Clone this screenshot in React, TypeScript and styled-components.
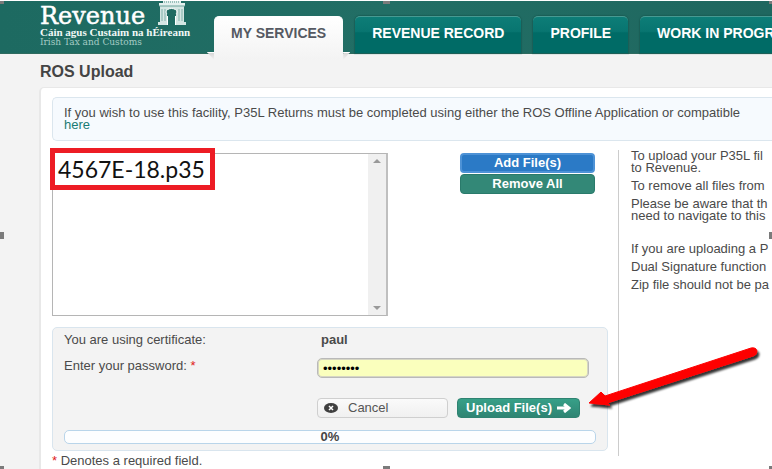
import React, { useState } from "react";
import styled, { createGlobalStyle } from "styled-components";

const GlobalStyle = createGlobalStyle`
  *, *::before, *::after { box-sizing: border-box; }
  html, body { margin: 0; }
  body {
    background: #f3f3f3;
    color: #4a4a4a;
    font: 13px/12px "Liberation Sans", Arial, sans-serif;
    overflow: hidden;
  }
  p, h1 { margin: 0; }
  button, input, select { font: inherit; margin: 0; }
`;

const Page = styled.div`
  position: relative;
  display: flex;
  flex-direction: column;
  min-height: 100vh;
  overflow: hidden;
`;

const Header = styled.header`
  display: flex;
  align-items: flex-start;
  height: 54px;
  border-top: 1px solid #fff;
  border-bottom: 1px solid #2f6b5f;
  background: linear-gradient(90deg, #1d6a61, #226e65 50%, #1f675f);
`;

const Brand = styled.a`
  display: flex;
  flex: none;
  width: 174px;
  margin-left: 40px;
  color: #fff;
  text-decoration: none;
  font-family: "DejaVu Serif", serif;
  white-space: nowrap;
`;

const BrandText = styled.span`
  display: flex;
  flex-direction: column;
  width: 117px;
  padding-top: 5px;
`;

const BrandName = styled.span`
  font-size: 24px;
  line-height: 21px;
  -webkit-text-stroke: 0.5px #fff;
`;

const BrandMotto = styled.span`
  color: #f0f8f6;
  font: bold 11px/10px "Liberation Serif", serif;
`;

const BrandLine = styled.span`
  color: #a5cbc5;
  font-size: 9px;
  line-height: 10px;
`;

const Arch = styled.svg`
  width: 30px;
  height: 25px;
  flex: none;
`;

const Tabs = styled.nav`
  display: flex;
  flex: 1;
  min-width: 0;
  gap: 12px;
  padding-top: 15px;
`;

const Tab = styled.a<{ $active?: boolean }>`
  position: relative;
  flex: none;
  height: ${(p) => (p.$active ? "44px" : "37px")};
  padding: 0 17px;
  border-radius: 5px 5px 0 0;
  border-top: 1px solid ${(p) => (p.$active ? "#fff" : "#479a92")};
  background: ${(p) =>
    p.$active
      ? "linear-gradient(#fff, #f3f3f3)"
      : "linear-gradient(#0d7d77, #087570 40%, #006b66 44%, #006b66)"};
  box-shadow: ${(p) => (p.$active ? "none" : "0 0 1px 1px #1b5f57")};
  color: ${(p) => (p.$active ? "#555962" : "#fff")};
  font-size: 14px;
  font-weight: bold;
  line-height: 33px;
  text-decoration: none;
  white-space: nowrap;

  &::before, &::after {
    content: ${(p) => (p.$active ? '""' : "none")};
    position: absolute;
    top: 35px;
    width: 7px;
    height: 8px;
    background: linear-gradient(#fff, #fff) top / 100% 1px no-repeat,
      linear-gradient(#d3d3d3, #f3f3f3);
  }
  &::before { right: 100%; clip-path: polygon(0 0, 100% 0, 100% 100%); }
  &::after { left: 100%; clip-path: polygon(0 0, 100% 0, 0 100%); }
`;

const Title = styled.h1`
  padding: 10px 0 7px 40px;
  color: #444;
  font-size: 16px;
  line-height: 16px;
`;

const Panel = styled.main`
  flex: 1;
  margin-left: 39px;
  padding: 9px 0 0 11px;
  border: solid #e8e8e8;
  border-width: 1px 0 0 2px;
  border-radius: 5px 0 0 0;
  background: #fff;
`;

const Notice = styled.div`
  height: 44px;
  padding: 9px 11px;
  border: 1px solid #dbe6ee;
  border-right: 0;
  border-radius: 5px 0 0 5px;
  background: #f6fafe;
  white-space: nowrap;
`;

const NoticeLink = styled.a`
  color: #1a7a74;
  text-decoration: none;
`;

const Columns = styled.div`
  display: flex;
  align-items: flex-start;
  margin-top: 12px;
`;

const UploadColumn = styled.form`
  flex: none;
  width: 556px;
`;

const Picker = styled.div`
  display: flex;
  justify-content: space-between;
  align-items: flex-start;
  padding-right: 13px;
`;

const FileBox = styled.div`
  position: relative;
  display: flex;
  justify-content: flex-end;
  width: 336px;
  height: 163px;
  border: 1px solid #b5b5b5;
  border-right: 2px solid #bfbfbf;
  background: #fff;
`;

const FileName = styled.output`
  position: absolute;
  top: -6px;
  left: -3px;
  padding: 0 5px 0 3px;
  border: 5px solid #ed1c24;
  background: #fff;
  color: #111;
  font: 23px/32px Lato, Carlito, sans-serif;
`;

const ScrollTrack = styled.div`
  display: flex;
  flex-direction: column;
  justify-content: space-between;
  align-items: center;
  width: 18px;
  padding: 5px 0;
  background: #f0f0f0;
`;

const ScrollArrow = styled.svg`
  width: 8px;
  height: 4px;
`;

const Stack = styled.div`
  display: flex;
  flex-direction: column;
  gap: 1px;
  width: 135px;
`;

const Button = styled.button<{ $tone: "blue" | "green" | "upload" | "plain" }>`
  display: flex;
  align-items: center;
  justify-content: ${(p) => (p.$tone === "plain" ? "flex-start" : "center")};
  gap: ${(p) => (p.$tone === "plain" ? "10px" : "5px")};
  height: 20px;
  padding: 0 6px;
  border-radius: 4px;
  border: ${(p) =>
    ({
      blue: "2px solid #4d92d6",
      green: "1px solid #2a7a6b",
      upload: "1px solid #2f8371",
      plain: "1px solid #cfcfcf",
    })[p.$tone]};
  background: ${(p) =>
    ({
      blue: "#2b7ac6",
      green: "#338877",
      upload: "linear-gradient(#37a088, #2f8573)",
      plain: "linear-gradient(#fafafa, #f0f0f0)",
    })[p.$tone]};
  color: ${(p) => (p.$tone === "plain" ? "#555" : "#fff")};
  font-weight: ${(p) => (p.$tone === "plain" ? "normal" : "bold")};
  white-space: nowrap;
`;

const Credentials = styled.section`
  display: flex;
  flex-direction: column;
  margin-top: 11px;
  padding: 6px 11px;
  border: 1px solid #d9e5ee;
  border-radius: 5px;
  background: #f3f3f3;
`;

const Field = styled.div<{ $gap?: boolean }>`
  display: grid;
  grid-template-columns: 253px 272px;
  align-items: start;
  margin-top: ${(p) => (p.$gap ? "12px" : "0")};
`;

const Label = styled.label`
  padding-top: 2px;
`;

const Value = styled.strong`
  padding: 0 4px;
`;

const PasswordInput = styled.input`
  width: 100%;
  height: 20px;
  padding: 0 5px;
  border: 1px solid #b9b9b9;
  border-radius: 5px;
  box-shadow: inset 0 0 0 1px #d6d6c4;
  background: #faffbd;
  color: #000;
`;

const Actions = styled.div`
  display: grid;
  grid-template-columns: 131px 123px;
  gap: 9px;
  margin: 20px 0 0 253px;
`;

const Progress = styled.div`
  margin-top: 12px;
  border: 1px solid #b9d5ea;
  border-radius: 5px;
  background: #fdfeff;
  color: #444;
  font-weight: bold;
  line-height: 12px;
  text-align: center;
`;

const Required = styled.span`
  color: #e02020;
`;

const Footnote = styled.p`
  margin-top: 4px;
`;

const Help = styled.aside`
  display: flex;
  flex: 1;
  flex-direction: column;
  gap: 6px;
  min-width: 0;
  height: 306px;
  margin: -3px 0 0 10px;
  padding: 0 0 0 12px;
  border-left: 1px solid #ccc;
  white-space: nowrap;
`;

const HelpText = styled.p<{ $spaced?: boolean }>`
  margin-top: ${(p) => (p.$spaced ? "15px" : "0")};
`;

const Pointer = styled.svg`
  position: absolute;
  left: 585px;
  top: 342px;
  width: 180px;
  height: 70px;
  pointer-events: none;
`;

const Handle = styled.span<{ $x: string; $y: string }>`
  position: absolute;
  width: ${(p) => (p.$x === "center" ? "7px" : "4px")};
  height: ${(p) => (p.$y === "center" ? "7px" : "3px")};
  background: #7b7b7b;
  ${(p) => ({ left: "left: 0;", center: "left: calc(50% - 3px);", right: "right: 0; width: 3px;" })[p.$x]}
  ${(p) => ({ top: "top: 1px;", center: "top: calc(50% - 3px);", bottom: "bottom: 0;" })[p.$y]}
`;

const handles = [
  ["left", "top"], ["center", "top"], ["right", "top"],
  ["left", "center"], ["right", "center"],
  ["left", "bottom"], ["center", "bottom"], ["right", "bottom"],
];

export default function App() {
  const [password, setPassword] = useState("password");
  return (
    <Page>
      <GlobalStyle />
      <Header>
        <Brand href="#">
          <BrandText>
            <BrandName>Revenue</BrandName>
            <BrandMotto>Cáin agus Custaim na hÉireann</BrandMotto>
            <BrandLine>Irish Tax and Customs</BrandLine>
          </BrandText>
          <Arch viewBox="0 0 30 25" aria-hidden="true">
            <path d="M6 0h18v2h4v3H2V2h4z" fill="#e4f0ee" />
            <path d="M3 5h24v16h2v3H19V12h-9v12H1v-3h2z" fill="#d4e6e3" />
            <path d="M5 8v12M8 8v12M22 8v12M25 8v12" stroke="#7fb0a9" strokeWidth="1" />
            <path d="M7 1h16" stroke="#4f9088" strokeWidth="1" strokeDasharray="1 1" />
            <path d="M2 5h26" stroke="#6aa29a" strokeWidth="1" />
            <ellipse cx="14.5" cy="11" rx="5.5" ry="3.5" fill="#1f6b62" stroke="#fff" strokeWidth="1" />
            <path d="M10 13h9v11h-9z" fill="#1f6b62" />
            <path d="M10.500 15v9M18.500 15v9" stroke="#fff" strokeWidth="1" />
          </Arch>
        </Brand>
        <Tabs>
          <Tab href="#" $active>MY SERVICES</Tab>
          <Tab href="#">REVENUE RECORD</Tab>
          <Tab href="#">PROFILE</Tab>
          <Tab href="#">WORK IN PROGR</Tab>
        </Tabs>
      </Header>
      <Title>ROS Upload</Title>
      <Panel>
        <Notice>
          If you wish to use this facility, P35L Returns must be completed using either the ROS Offline Application or compatible
          <br />
          <NoticeLink href="#">here</NoticeLink>
        </Notice>
        <Columns>
          <UploadColumn onSubmit={(e) => e.preventDefault()}>
            <Picker>
              <FileBox>
                <FileName>4567E-18.p35</FileName>
                <ScrollTrack>
                  <ScrollArrow viewBox="0 0 8 4"><path d="M0 4l4-4 4 4z" fill="#999" /></ScrollArrow>
                  <ScrollArrow viewBox="0 0 8 4"><path d="M0 0l4 4 4-4z" fill="#999" /></ScrollArrow>
                </ScrollTrack>
              </FileBox>
              <Stack>
                <Button type="button" $tone="blue">Add File(s)</Button>
                <Button type="button" $tone="green">Remove All</Button>
              </Stack>
            </Picker>
            <Credentials>
              <Field>
                <span>You are using certificate:</span>
                <Value>paul</Value>
              </Field>
              <Field $gap>
                <Label htmlFor="password">Enter your password: <Required>*</Required></Label>
                <PasswordInput id="password" type="password" value={password} onChange={(e) => setPassword(e.target.value)} />
              </Field>
              <Actions>
                <Button type="button" $tone="plain">
                  <svg width="14" height="10" viewBox="0 0 14 10" aria-hidden="true">
                    <ellipse cx="7" cy="5" rx="7" ry="5" fill="#3f3f3f" />
                    <path d="M5 3l4 4M9 3L5 7" stroke="#fff" strokeWidth="1.5" />
                  </svg>
                  Cancel
                </Button>
                <Button type="submit" $tone="upload">
                  Upload File(s)
                  <svg width="14" height="10" viewBox="0 0 14 10" aria-hidden="true">
                    <path d="M0 5h11M7 1l5 4-5 4" fill="none" stroke="#fff" strokeWidth="3" />
                  </svg>
                </Button>
              </Actions>
              <Progress role="progressbar" aria-label="Upload progress" aria-valuenow={0}>0%</Progress>
            </Credentials>
            <Footnote><Required>*</Required> Denotes a required field.</Footnote>
          </UploadColumn>
          <Help>
            <HelpText>To upload your P35L fil<br />to Revenue.</HelpText>
            <HelpText>To remove all files from</HelpText>
            <HelpText>Please be aware that th<br />need to navigate to this</HelpText>
            <HelpText $spaced>If you are uploading a P</HelpText>
            <HelpText>Dual Signature function</HelpText>
            <HelpText>Zip file should not be pa</HelpText>
          </Help>
        </Columns>
      </Panel>
      <Pointer viewBox="0 0 180 70" aria-hidden="true">
        <defs>
          <filter id="shade" x="-10%" y="-20%" width="120%" height="150%">
            <feDropShadow dx="2" dy="3" stdDeviation="1.2" floodColor="#000" floodOpacity="0.8" />
          </filter>
        </defs>
        <path
          d="M4 61L16 50L20 54L166 6Q171 5 172 9Q172 13 168 14L22 61L25 63Z"
          fill="#fe0000" stroke="#fe0000" strokeLinejoin="round" filter="url(#shade)"
        />
      </Pointer>
      {handles.map(([x, y]) => <Handle key={x + y} $x={x} $y={y} />)}
    </Page>
  );
}
